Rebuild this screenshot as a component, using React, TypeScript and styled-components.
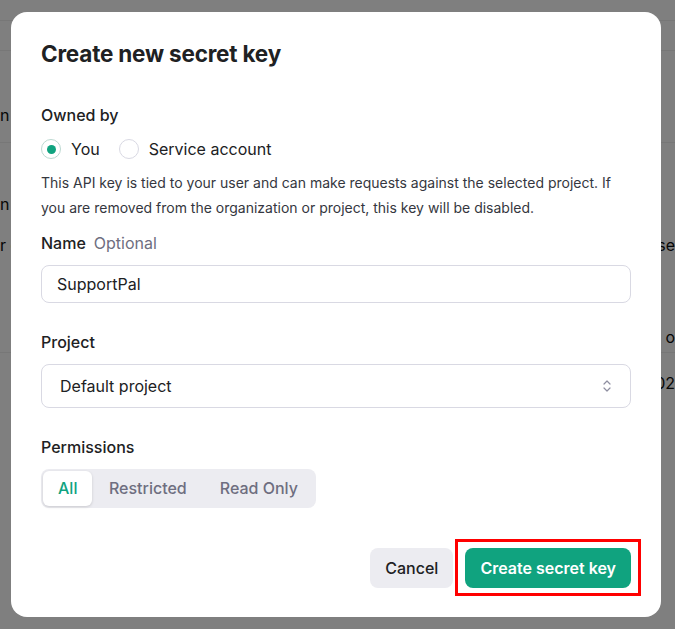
import React, { useState } from "react";
import styled, { createGlobalStyle } from "styled-components";

const GlobalStyle = createGlobalStyle`
  html, body {
    margin: 0;
    padding: 0;
    background: #ffffff;
  }
  body {
    font-family: Inter, "Noto Sans", "Liberation Sans", sans-serif;
    -webkit-font-smoothing: antialiased;
  }
  * {
    box-sizing: border-box;
  }
`;

const Page = styled.div`
  position: relative;
  width: 675px;
  height: 629px;
  overflow: hidden;
  background: #ffffff;
`;

// the page behind the dialog, mostly hidden
const BgTable = styled.div`
  display: flex;
  flex-direction: column;
  color: #0d0d0d;
  font-size: 16px;
`;

const BgRow = styled.div<{ $h: number; $pad?: number; $line?: boolean }>`
  height: ${(p) => p.$h}px;
  padding-bottom: ${(p) => p.$pad ?? 0}px;
  border-bottom: ${(p) => (p.$line ? "1px solid #efefef" : "none")};
  display: flex;
  justify-content: space-between;
  align-items: flex-end;
  white-space: nowrap;
  line-height: 20px;
`;

const Overlay = styled.div`
  position: absolute;
  inset: 0;
  background: rgba(0, 0, 0, 0.5);
  display: flex;
  align-items: flex-start;
  justify-content: flex-start;
  padding: 12px 14px 12px 11px;
`;

const Dialog = styled.div`
  width: 650px;
  height: 605px;
  background: #ffffff;
  border-radius: 16px;
  padding: 28px 30px 29px 30px;
  display: flex;
  flex-direction: column;
  color: #202123;
`;

const Title = styled.h2`
  margin: 0;
  font-size: 22.5px;
  line-height: 28px;
  font-weight: 700;
  letter-spacing: -0.2px;
  color: #202123;
`;

const Section = styled.div<{ $top: number }>`
  margin-top: ${(p) => p.$top}px;
  display: flex;
  flex-direction: column;
`;

const Label = styled.div`
  font-size: 16px;
  line-height: 24px;
  font-weight: 500;
  color: #202123;
  display: flex;
  gap: 8px;
`;

const Optional = styled.span`
  font-weight: 400;
  color: #6e6e80;
`;

const RadioRow = styled.div`
  margin-top: 10px;
  display: flex;
  align-items: center;
  gap: 19px;
  height: 24px;
`;

const RadioOption = styled.label`
  display: flex;
  align-items: center;
  gap: 10px;
  font-size: 16px;
  color: #202123;
  cursor: pointer;
`;

const RadioCircle = styled.span<{ $checked: boolean }>`
  width: 20px;
  height: 20px;
  border-radius: 50%;
  border: 1px solid ${(p) => (p.$checked ? "#bcd9d1" : "#d9d9e3")};
  display: flex;
  align-items: center;
  justify-content: center;

  &::after {
    content: "";
    width: 9px;
    height: 9px;
    border-radius: 50%;
    background: ${(p) => (p.$checked ? "#10a37f" : "transparent")};
  }
`;

const Help = styled.p`
  margin: 9px 0 0;
  font-size: 14px;
  line-height: 25px;
  color: #353740;
`;

const TextInput = styled.input`
  margin-top: 10px;
  height: 38px;
  width: 100%;
  border: 1px solid #d9d9e3;
  border-radius: 8px;
  padding: 0 15px;
  font-family: inherit;
  font-size: 16px;
  color: #202123;
  outline: none;
`;

const SelectBox = styled.div`
  margin-top: 10px;
  height: 44px;
  border: 1px solid #d9d9e3;
  border-radius: 8px;
  padding: 0 18px 0 18px;
  display: flex;
  align-items: center;
  justify-content: space-between;
  font-size: 16px;
  color: #202123;
`;

const Segmented = styled.div`
  margin-top: 10px;
  align-self: flex-start;
  height: 39px;
  background: #ececf1;
  border-radius: 8px;
  padding: 2px;
  display: flex;
`;

const Segment = styled.button<{ $active: boolean }>`
  border: none;
  font-family: inherit;
  font-size: 16px;
  font-weight: 500;
  padding: 0 ${(p) => (p.$active ? "15px" : "16.5px")};
  border-radius: 6px;
  background: ${(p) => (p.$active ? "#ffffff" : "transparent")};
  color: ${(p) => (p.$active ? "#10a37f" : "#6e6e80")};
  box-shadow: ${(p) => (p.$active ? "0 1px 3px rgba(0,0,0,0.15)" : "none")};
  cursor: pointer;
`;

const Footer = styled.div`
  margin-top: auto;
  display: flex;
  justify-content: flex-end;
  gap: 12px;
`;

const Button = styled.button<{ $primary?: boolean }>`
  position: relative;
  height: 40px;
  border: none;
  border-radius: 8px;
  padding: 0 15px;
  font-family: inherit;
  font-size: 16px;
  font-weight: ${(p) => (p.$primary ? 600 : 500)};
  background: ${(p) => (p.$primary ? "#10a37f" : "#ececf1")};
  color: ${(p) => (p.$primary ? "#ffffff" : "#202123")};
  cursor: pointer;
`;

// red annotation box drawn over the screenshot
const Highlight = styled.span`
  position: absolute;
  top: -9px;
  bottom: -8px;
  left: -10px;
  right: -10px;
  border: 3px solid #ff0000;
  pointer-events: none;
`;

const ChevronIcon = () => (
  <svg width="10" height="14" viewBox="0 0 10 14" fill="none">
    <path
      d="M2 5l3-3 3 3M2 9l3 3 3-3"
      stroke="#8e8ea0"
      strokeWidth="1.2"
      strokeLinecap="round"
      strokeLinejoin="round"
    />
  </svg>
);

export default function App() {
  const [owner, setOwner] = useState("you");
  const [perm, setPerm] = useState("All");

  return (
    <Page>
      <GlobalStyle />
      <BgTable>
        <BgRow $h={21} $line />
        <BgRow $h={30} $line />
        <BgRow $h={92} $pad={17} $line>
          <span>n</span>
          <span />
        </BgRow>
        <BgRow $h={72} $pad={1}>
          <span>n '</span>
          <span />
        </BgRow>
        <BgRow $h={44} $pad={4}>
          <span>r c</span>
          <span>lse</span>
        </BgRow>
        <BgRow $h={94} $pad={5} $line>
          <span />
          <span>o</span>
        </BgRow>
        <BgRow $h={40}>
          <span />
          <span>02</span>
        </BgRow>
      </BgTable>

      <Overlay>
        <Dialog>
          <Title>Create new secret key</Title>

          <Section $top={35}>
            <Label>Owned by</Label>
            <RadioRow>
              <RadioOption onClick={() => setOwner("you")}>
                <RadioCircle $checked={owner === "you"} />
                You
              </RadioOption>
              <RadioOption onClick={() => setOwner("service")}>
                <RadioCircle $checked={owner === "service"} />
                Service account
              </RadioOption>
            </RadioRow>
            <Help>
              This API key is tied to your user and can make requests against the
              selected project. If you are removed from the organization or
              project, this key will be disabled.
            </Help>
          </Section>

          <Section $top={10.5}>
            <Label>
              Name <Optional>Optional</Optional>
            </Label>
            <TextInput defaultValue="SupportPal" />
          </Section>

          <Section $top={27}>
            <Label>Project</Label>
            <SelectBox>
              <span>Default project</span>
              <ChevronIcon />
            </SelectBox>
          </Section>

          <Section $top={27}>
            <Label>Permissions</Label>
            <Segmented>
              {["All", "Restricted", "Read Only"].map((p) => (
                <Segment key={p} $active={perm === p} onClick={() => setPerm(p)}>
                  {p}
                </Segment>
              ))}
            </Segmented>
          </Section>

          <Footer>
            <Button>Cancel</Button>
            <Button $primary>
              Create secret key
              <Highlight />
            </Button>
          </Footer>
        </Dialog>
      </Overlay>
    </Page>
  );
}
